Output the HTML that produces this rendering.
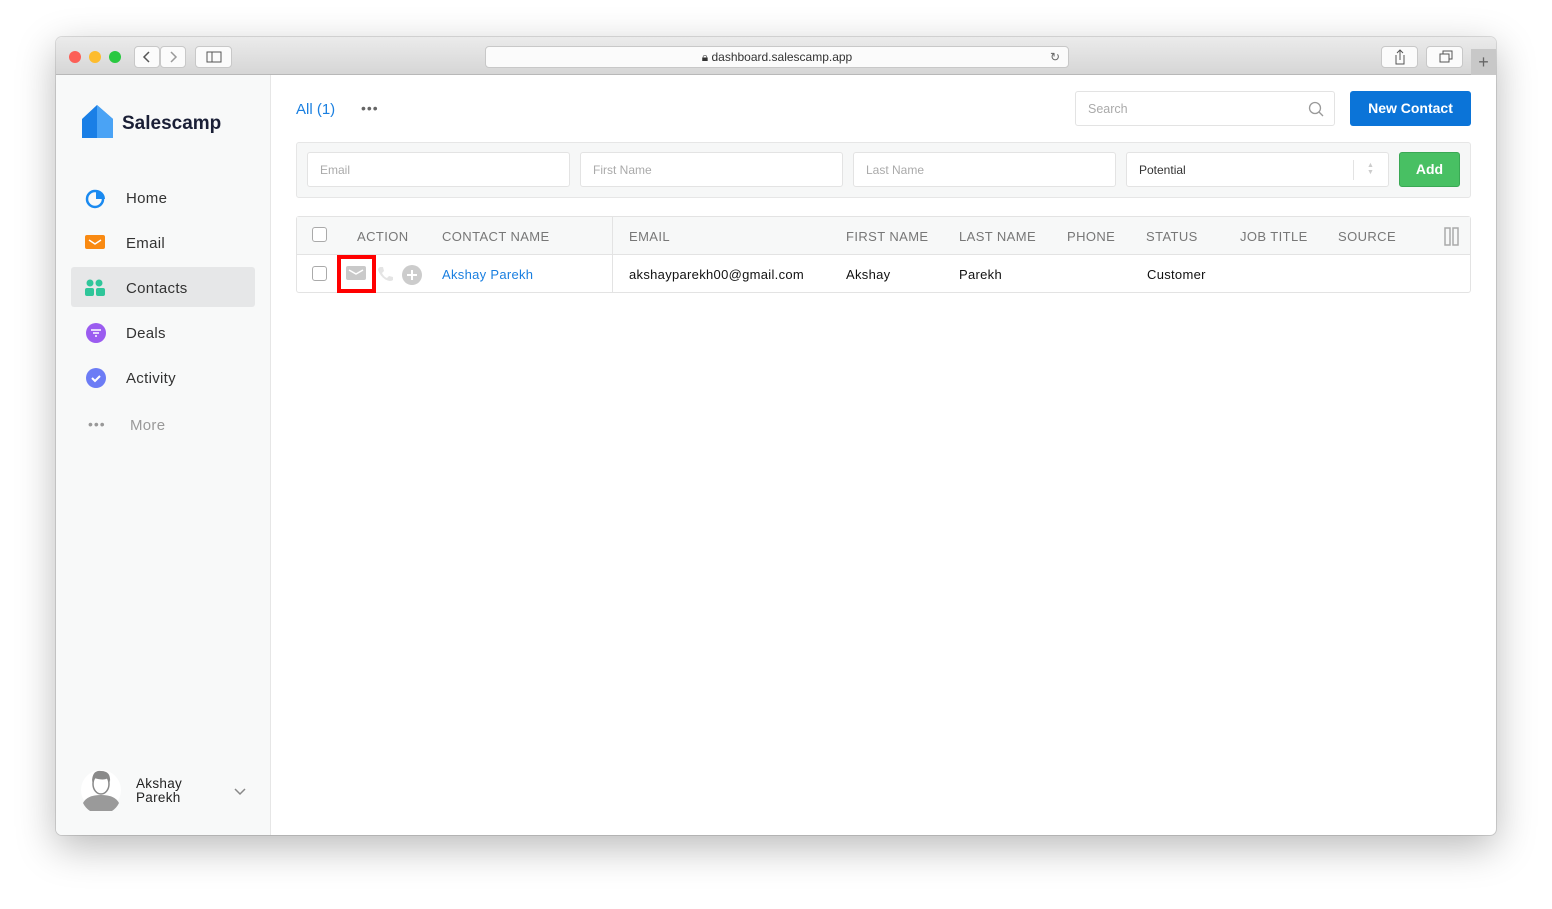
<!DOCTYPE html>
<html><head><style>
*{box-sizing:border-box;margin:0;padding:0}
body{width:1552px;height:909px;background:#fff;font-family:"Liberation Sans",sans-serif;position:relative;overflow:hidden}
.win{position:absolute;left:56px;top:37px;width:1440px;height:798px;border-radius:6px;overflow:hidden;box-shadow:0 12px 40px rgba(0,0,0,.28),0 0 0 1px rgba(0,0,0,.12);background:#fff}
.tb{position:absolute;left:0;top:0;width:1440px;height:38px;background:linear-gradient(#ebebeb,#d6d6d6);border-bottom:1px solid #b8b8b8}
.dot{position:absolute;top:14px;width:12px;height:12px;border-radius:50%}
.btn{position:absolute;top:9px;height:22px;background:#fbfbfb;border:1px solid #c8c8c8;border-radius:4px}
.abs{position:absolute}
.side{position:absolute;left:0;top:38px;width:215px;height:760px;background:#f8f9f9;border-right:1px solid #e6e6e6}
.nav{position:absolute;left:70px;font-size:15px;color:#333;letter-spacing:.3px}
.inp{position:absolute;top:115px;height:35px;background:#fff;border:1px solid #e3e3e3;border-radius:3px;font-size:12px;color:#aaa;padding:10px 12px}
.th{position:absolute;top:192px;font-size:13px;color:#777;letter-spacing:.4px}
.td{position:absolute;top:230px;font-size:13px;color:#111;letter-spacing:.3px}
.cb{position:absolute;width:15px;height:15px;border:1.5px solid #aaa;border-radius:3px;background:#fff}
</style></head><body>
<div class="win">
 <div class="tb">
  <div class="dot" style="left:13px;background:#fc5f57"></div>
  <div class="dot" style="left:33px;background:#fdbc2e"></div>
  <div class="dot" style="left:53px;background:#29c840"></div>
  <div class="btn" style="left:78px;width:26px"><svg width="24" height="20"><path d="M14 5l-5 5 5 5" stroke="#555" fill="none" stroke-width="1.5"/></svg></div>
  <div class="btn" style="left:104px;width:26px"><svg width="24" height="20"><path d="M10 5l5 5-5 5" stroke="#999" fill="none" stroke-width="1.5"/></svg></div>
  <div class="btn" style="left:139px;width:37px"><svg width="36" height="20"><rect x="11" y="5" width="14" height="10" stroke="#555" fill="none"/><line x1="16" y1="5" x2="16" y2="15" stroke="#555"/></svg></div>
  <div class="btn" style="left:429px;width:584px;text-align:center;font-size:12px;color:#333;line-height:20px">🔒︎ dashboard.salescamp.app<span style="position:absolute;right:8px;color:#666">↻</span></div>
  <div class="btn" style="left:1325px;width:37px"><svg width="36" height="20"><path d="M14 8v9h8V8M18 3v10M15 6l3-3 3 3" stroke="#555" fill="none"/></svg></div>
  <div class="btn" style="left:1370px;width:37px"><svg width="36" height="20"><rect x="13" y="7" width="9" height="8" stroke="#555" fill="none"/><path d="M16 7V4h9v8h-3" stroke="#555" fill="none"/></svg></div>
  <div class="abs" style="left:1415px;top:12px;width:25px;height:26px;background:#c8c8c8;color:#666;font-size:18px;text-align:center;line-height:26px">+</div>
 </div>
 <div class="side">
  <svg class="abs" style="left:24px;top:30px" width="34" height="34"><path d="M2 14L17 0 33 14V33H2Z" fill="#1a7fe6"/><path d="M17 0L33 14V33H17Z" fill="#4aa3f5"/></svg>
  <div class="abs" style="left:66px;top:38px;font-size:19px;font-weight:bold;color:#1a1f36">Salescamp</div>
  <svg class="abs" style="left:29px;top:113px" width="22" height="22"><circle cx="10" cy="11" r="8" stroke="#1a8af0" stroke-width="2.5" fill="none"/><path d="M11 2a9 9 0 0 1 9 9h-9z" fill="#1a8af0"/></svg>
  <div class="nav" style="top:115px">Home</div>
  <svg class="abs" style="left:29px;top:160px" width="22" height="16"><rect width="20" height="14" rx="2" fill="#f98a12"/><path d="M4 5l6 4 6-4" stroke="#fff" fill="none" stroke-width="1.5"/></svg>
  <div class="nav" style="top:160px">Email</div>
  <div class="abs" style="left:15px;top:192px;width:184px;height:40px;background:#e6e7e8;border-radius:3px"></div>
  <svg class="abs" style="left:29px;top:204px" width="22" height="20"><circle cx="5" cy="4" r="3.5" fill="#2fc69a"/><circle cx="14" cy="4" r="3.5" fill="#2fc69a"/><rect x="0" y="9" width="9" height="8" rx="2" fill="#2fc69a"/><rect x="11" y="9" width="9" height="8" rx="2" fill="#2fc69a"/></svg>
  <div class="nav" style="top:205px">Contacts</div>
  <svg class="abs" style="left:30px;top:248px" width="20" height="20"><circle cx="10" cy="10" r="10" fill="#9b5cf0"/><path d="M5 7h10M7 10h6M9 13h2" stroke="#fff" stroke-width="1.5"/></svg>
  <div class="nav" style="top:250px">Deals</div>
  <svg class="abs" style="left:30px;top:293px" width="20" height="20"><circle cx="10" cy="10" r="10" fill="#6c7cf5"/><path d="M6 10l3 3 5-5" stroke="#fff" stroke-width="2" fill="none"/></svg>
  <div class="nav" style="top:295px">Activity</div>
  <div class="abs" style="left:32px;top:341px;color:#999;font-size:14px;letter-spacing:1px">•••</div>
  <div class="nav" style="left:74px;top:342px;color:#999">More</div>
  <svg class="abs" style="left:25px;top:694px" width="40" height="42"><circle cx="20" cy="21" r="20" fill="#fff"/><path d="M2 34q4-8 18-8 14 0 18 8a20 20 0 0 1-36 0z" fill="#9a9a9a"/><ellipse cx="20" cy="15" rx="8" ry="10" fill="#fff" stroke="#888" stroke-width="1.5"/><path d="M11 13q0-12 9-11 10 0 9 11l-2-4q-4 3-14 0z" fill="#8a8a8a"/></svg>
  <div class="abs" style="left:80px;top:702px;font-size:13.5px;color:#222;line-height:14px;letter-spacing:.3px">Akshay<br>Parekh</div>
  <svg class="abs" style="left:178px;top:713px" width="12" height="8"><path d="M1 1l5 5 5-5" stroke="#888" stroke-width="1.5" fill="none"/></svg>
 </div>
 <div class="abs" style="left:240px;top:64px;font-size:15px;color:#1a7fe0">All (1)</div>
 <div class="abs" style="left:305px;top:63px;font-size:14px;color:#666;letter-spacing:1px">•••</div>
 <div class="abs" style="left:1019px;top:54px;width:260px;height:35px;border:1px solid #e3e3e3;border-radius:3px;font-size:12.5px;color:#aaa;padding:10px 12px">Search<svg class="abs" style="right:10px;top:9px" width="16" height="16"><circle cx="7" cy="7" r="5.5" stroke="#999" fill="none" stroke-width="1.3"/><path d="M11 11l4 4" stroke="#999" stroke-width="1.3"/></svg></div>
 <div class="abs" style="left:1294px;top:54px;width:121px;height:35px;background:#0b74d8;border-radius:3px;color:#fff;font-weight:bold;font-size:14px;text-align:center;line-height:35px">New Contact</div>
 <div class="abs" style="left:240px;top:105px;width:1175px;height:56px;background:#f6f7f7;border:1px solid #e6e6e6;border-radius:3px"></div>
 <div class="inp" style="left:251px;width:263px">Email</div>
 <div class="inp" style="left:524px;width:263px">First Name</div>
 <div class="inp" style="left:797px;width:263px">Last Name</div>
 <div class="inp" style="left:1070px;width:263px;color:#333">Potential<div class="abs" style="left:226px;top:7px;width:1px;height:20px;background:#e3e3e3"></div><div class="abs" style="left:240px;top:9px;font-size:7px;color:#ccc;line-height:7px">▲<br>▼</div></div>
 <div class="abs" style="left:1343px;top:115px;width:61px;height:35px;background:#48c063;border:1px solid #3aa854;border-radius:3px;color:#fff;font-weight:bold;font-size:14px;text-align:center;line-height:33px">Add</div>
 <div class="abs" style="left:240px;top:179px;width:1175px;height:77px;border:1px solid #e3e3e3;border-radius:3px"></div>
 <div class="abs" style="left:241px;top:180px;width:1173px;height:38px;background:#f7f8f8;border-bottom:1px solid #e3e3e3"></div>
 <div class="abs" style="left:556px;top:180px;width:1px;height:75px;background:#e3e3e3"></div>
 <div class="cb" style="left:256px;top:190px"></div>
 <div class="cb" style="left:256px;top:229px"></div>
 <div class="th" style="left:301px">ACTION</div>
 <div class="th" style="left:386px">CONTACT NAME</div>
 <div class="th" style="left:573px">EMAIL</div>
 <div class="th" style="left:790px">FIRST NAME</div>
 <div class="th" style="left:903px">LAST NAME</div>
 <div class="th" style="left:1011px">PHONE</div>
 <div class="th" style="left:1090px">STATUS</div>
 <div class="th" style="left:1184px">JOB TITLE</div>
 <div class="th" style="left:1282px">SOURCE</div>
 <svg class="abs" style="left:1388px;top:190px" width="16" height="19"><rect x="1" y="1" width="5" height="17" stroke="#aaa" fill="none" stroke-width="1.5"/><rect x="9" y="1" width="5" height="17" stroke="#aaa" fill="none" stroke-width="1.5"/></svg>
 <div class="abs" style="left:281px;top:218px;width:39px;height:38px;border:4px solid #f00"></div>
 <svg class="abs" style="left:290px;top:229px" width="21" height="15"><rect width="20" height="14" rx="2" fill="#c9c9c9"/><path d="M3 4l7 4 7-4" stroke="#fff" fill="none" stroke-width="1.5"/></svg>
 <svg class="abs" style="left:321px;top:229px" width="16" height="16"><path d="M3 1l3 0 1 4-2 2q2 4 5 5l2-2 4 1v3q-1 1-3 1Q5 14 1 4 1 2 3 1z" fill="#e4e4e4"/></svg>
 <svg class="abs" style="left:346px;top:228px" width="20" height="20"><circle cx="10" cy="10" r="10" fill="#ccc"/><path d="M10 5v10M5 10h10" stroke="#fff" stroke-width="2"/></svg>
 <div class="td" style="left:386px;color:#1a7fe0">Akshay Parekh</div>
 <div class="td" style="left:573px">akshayparekh00@gmail.com</div>
 <div class="td" style="left:790px">Akshay</div>
 <div class="td" style="left:903px">Parekh</div>
 <div class="td" style="left:1091px">Customer</div>
</div>
</body></html>
